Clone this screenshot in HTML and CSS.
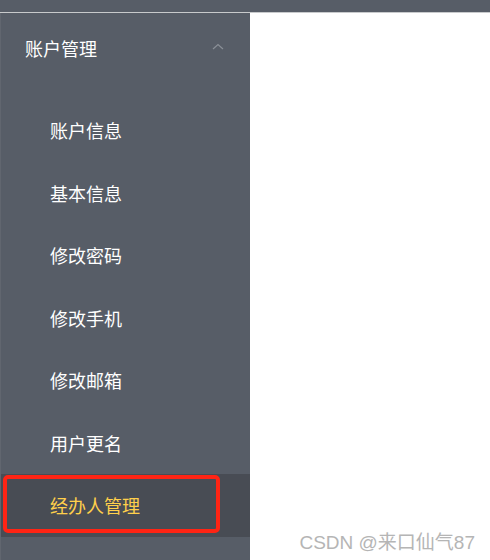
FILE: index.html
```html
<html>
<head>
<title>账户管理</title>
<meta name="viewport" content="width=device-width, initial-scale=1">
<link rel="stylesheet" href="styles.css">
</head>
<body>

<div class="topbar"></div>

<div class="layout">
	<div class="sidebar">
		<div class="submenu-title">
			<span>账户管理</span>
			<svg class="arrow" width="12" height="7" viewBox="0 0 12 7"><path d="M1 6 L6 1.5 L11 6" fill="none" stroke="#8a8f97" stroke-width="1.2"/></svg>
		</div>
		<ul class="menu">
			<li class="item">账户信息</li>
			<li class="item">基本信息</li>
			<li class="item">修改密码</li>
			<li class="item">修改手机</li>
			<li class="item">修改邮箱</li>
			<li class="item">用户更名</li>
			<li class="item active">经办人管理<div class="mark"></div></li>
		</ul>
	</div>
	<div class="main"></div>
</div>

<div class="watermark">CSDN @来口仙气87</div>

</body>
</html>
```

FILE: styles.css
```css
body{
	margin: 0;
	height: 560px;
	overflow: hidden;
	background: #fff;
	font-family: "Noto Sans CJK SC", "Liberation Sans", sans-serif;
}

.topbar{
	height: 12px;
	background: #575d67;
	border-bottom: 1px solid #c8cacc;
}

.layout{
	display: flex;
	height: 547px;
}

.sidebar{
	width: 250px;
	background: #575d67;
	border-left: 1px solid #61666f;
	box-sizing: border-box;
}

.main{
	flex: 1;
	background: #fff;
}

.submenu-title{
	height: 69px;
	display: flex;
	align-items: center;
	justify-content: space-between;
	padding: 0 26px 0 24px;
	color: #fff;
	font-size: 18px;
}

.arrow{
	margin-top: -3px;
}

.menu{
	list-style: none;
	margin: 0;
	padding: 17px 0 0 0;
}

.item{
	position: relative;
	height: 62.5px;
	line-height: 62.5px;
	padding-left: 49px;
	color: #fff;
	font-size: 18px;
}

.item.active{
	background: #484c54;
	color: #ffd04b;
}

.mark{
	position: absolute;
	left: 2px;
	top: 1px;
	width: 209px;
	height: 50px;
	border: 4px solid #ff2414;
	border-radius: 5px;
}

.watermark{
	position: absolute;
	right: 15px;
	bottom: 6px;
	color: #b5b5b5;
	font-size: 19px;
	font-family: "Liberation Sans", "Noto Sans CJK SC", sans-serif;
}
```
